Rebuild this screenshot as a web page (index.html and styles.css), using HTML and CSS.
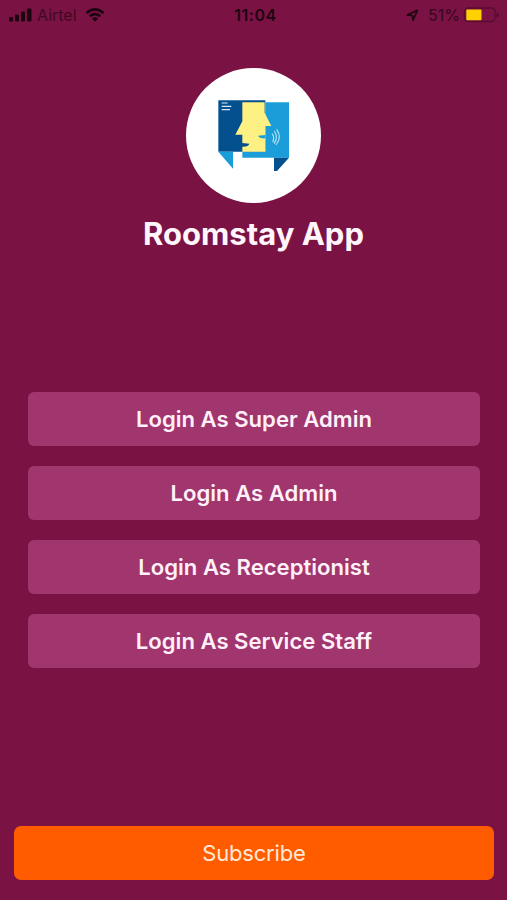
FILE: index.html
```html
<!DOCTYPE html>
<html lang="en">
<head>
<meta charset="utf-8">
<meta name="viewport" content="width=device-width, initial-scale=1">
<title>Roomstay App</title>
<link rel="stylesheet" href="styles.css">
</head>
<body>
<div class="screen">
  <header class="status">
    <div class="status-left">
      <svg class="signal" width="23" height="14" viewBox="0 0 23 14"><rect x="0" y="9" width="4" height="4.500" rx="1"/><rect x="6" y="6.500" width="4" height="7" rx="1"/><rect x="12" y="3.500" width="4" height="10" rx="1"/><rect x="18" y="0.500" width="4.500" height="13" rx="1"/></svg>
      <span class="carrier">Airtel</span>
      <svg class="wifi" width="20" height="14" viewBox="0 0 20 14"><path d="M1.500 5Q10-2.200 18.500 5M4.700 8.300Q10 4 15.300 8.300" fill="none" stroke="currentColor" stroke-width="2.600"/><path d="M6.800 10.500Q10 8 13.200 10.500L10 13.700Z"/></svg>
    </div>
    <time class="clock">11:04</time>
    <div class="status-right">
      <svg class="location" width="13" height="13" viewBox="0 0 13 13"><path d="M11.300 1.300L7 11.300 6.300 6.500 1.300 6Z" fill="none" stroke="currentColor" stroke-width="1.700" stroke-linejoin="round"/></svg>
      <span class="percent">51%</span>
      <svg class="battery" width="36" height="16" viewBox="0 0 36 16"><rect x="1.500" y="1" width="30.500" height="13.500" rx="3.500" fill="none" stroke="#590b32" stroke-width="1.300"/><rect x="3.300" y="2.600" width="15.200" height="10.600" rx="1" fill="#ffd000"/><path d="M33.500 5.200Q36 6 36 8T33.500 10.800Z" fill="#590b32"/></svg>
    </div>
  </header>
  <section class="brand">
    <svg class="logo" width="135" height="135" viewBox="19 24 405 405">
      <circle cx="221.500" cy="226.500" r="202.500" fill="#fff"/>
      <path d="M116 121H257V275H116Z" fill="#04508f"/>
      <path d="M257 127H328V293H188V275H257Z" fill="#1b9dd9"/>
      <path d="M116 275H160V326Z" fill="#1b9dd9"/>
      <path d="M283 293H328L292 333H283Z" fill="#04508f"/>
      <path d="M188 127H255V158L275 198H257V275H188V260C198 260 207 258 209 251L188 249V224H167L188 184Z" fill="#fdf183"/>
      <path d="M235 227L257 225V235C246 236 238 233 235 227Z" fill="#1b9dd9"/>
      <path d="M126 129H144M126 139H155M126 149H151" stroke="#d7e9f5" stroke-width="3.500"/>
      <path d="M277 221Q286 232 279 246M284 213Q297 232 283 251M291 208Q308 232 289 255" fill="none" stroke="#b5e3f6" stroke-width="3.500"/>
    </svg>
    <h1 class="title">Roomstay App</h1>
  </section>
  <nav class="roles">
    <button class="role super">Login As Super Admin</button>
    <button class="role admin">Login As Admin</button>
    <button class="role reception">Login As Receptionist</button>
    <button class="role staff">Login As Service Staff</button>
  </nav>
  <button class="subscribe">Subscribe</button>
</div>
</body>
</html>
```
FILE: styles.css
```css
* { box-sizing: border-box; }
body { margin: 0; background: #7a1343; font-family: Inter, "Liberation Sans", sans-serif; }
button { display: block; border: 0; margin: 0; padding: 0; font-family: inherit; }
.screen { display: flex; flex-direction: column; width: 507px; height: 900px; padding-bottom: 20px; }
.status { display: grid; grid-template-columns: 1fr auto 1fr; align-items: center; height: 30px; padding: 0 8px 0 9px; color: #1d0410; }
.status svg { display: block; fill: currentColor; }
.status-left, .status-right { display: flex; align-items: center; }
.status-right { justify-content: flex-end; }
.carrier { margin-left: 5px; font-size: 16px; line-height: 20px; color: #400923; }
.wifi { margin-left: 8px; }
.clock { padding-left: 3px; font-size: 16px; font-weight: 600; line-height: 20px; letter-spacing: .5px; }
.percent { margin: 0 3px 0 9px; font-size: 16px; line-height: 20px; color: #35071d; }
.brand { display: flex; flex-direction: column; align-items: center; padding-top: 38px; }
.logo { display: block; }
.title { margin: 11px 0 0; font-size: 31px; line-height: 40px; font-weight: 700; color: #fff5fc; white-space: nowrap; }
.roles { display: flex; flex-direction: column; gap: 20.300px; margin: 137.500px 27px 0 28px; }
.role { height: 54px; border-radius: 6px; background: #a1356d; color: #fff0fa; font-size: 22.100px; font-weight: 600; line-height: 54px; }
.subscribe { height: 54px; margin: auto 13.500px 0 14.400px; border-radius: 7px; background: #ff5c00; color: #ffe9d5; font-size: 22px; line-height: 54px; letter-spacing: -.2px; }
```
